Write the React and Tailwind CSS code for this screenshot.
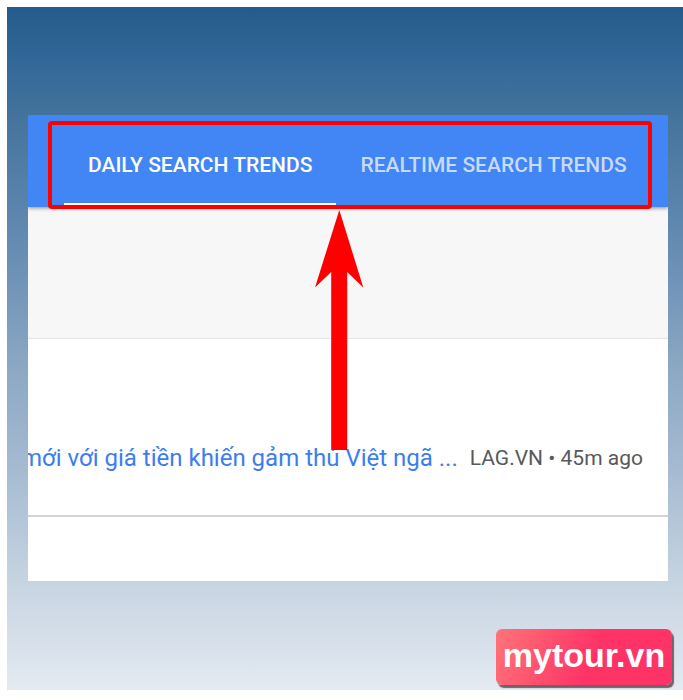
import React, { useState } from "react";

const tabs = ["DAILY SEARCH TRENDS", "REALTIME SEARCH TRENDS"];

const TrendTabs = () => {
  const [active, setActive] = useState(0);

  return (
    <nav className="relative z-10 flex h-[92px] bg-[#4285f4] pl-9 shadow-[0_1px_4px_rgba(0,0,0,0.45)]">
      {tabs.map((tab, i) => (
        <button
          key={tab}
          type="button"
          onClick={() => setActive(i)}
          className={`border-b-4 px-6 pt-[18px] pb-1 text-[21px] font-medium whitespace-nowrap ${
            active === i ? "border-white text-white" : "border-transparent text-[#c9dbfc]"
          }`}
        >
          {tab}
        </button>
      ))}
      {/* highlight around the tabs */}
      <div className="pointer-events-none absolute top-[6px] right-4 -bottom-[2px] left-5 rounded border-4 border-[#ff0000]" />
    </nav>
  );
};

const Arrow = () => (
  <svg
    viewBox="0 0 50 240"
    className="pointer-events-none absolute top-[95px] left-[286px] z-20 h-[240px] w-[50px]"
    aria-hidden="true"
  >
    <path d="M25.3 0L49.3 77.5L33.2 62V240H17.2V62L1 77.5Z" fill="#ff0000" />
  </svg>
);

const TrendRow = () => (
  <div className="flex h-[178px] items-end justify-end gap-3 overflow-hidden border-b-2 border-[#d3d4d5] pr-[25px] pb-[43px] leading-7 whitespace-nowrap">
    <a href="#" className="shrink-0 text-[24px] text-[#3b7df0]">
      mới với giá tiền khiến gảm thủ Việt ngã ...
    </a>
    <span className="shrink-0 text-[21px] text-[#58595b]">LAG.VN • 45m ago</span>
  </div>
);

const App = () => {
  return (
    <div className="min-h-screen bg-white pt-[7px] pb-[10px] pl-[7px] font-['Roboto',sans-serif]">
      <div className="bg-[linear-gradient(to_bottom,#245b8b_0%,#326899_8%,#42729b_15%,#5c85ad_30%,#7093b8_40%,#8aa7c2_52%,#a6bbd2_68%,#c8d5e2_85%,#e3eaf2_100%)] pt-[108px] pr-[15px] pb-[5px] pl-[21px]">
        <main className="relative overflow-hidden bg-white">
          <TrendTabs />
          <div className="h-[132px] border-b border-[#e4e4e4] bg-[#f7f7f7]" />
          <TrendRow />
          <div className="h-16" />
          <Arrow />
        </main>
        <div className="-mr-1 flex justify-end pt-12">
          <a
            href="#"
            className="flex h-14 w-44 items-center justify-center rounded-md bg-[linear-gradient(110deg,#ff7379_0%,#ff3366_55%)] pb-1 font-['Liberation_Sans',sans-serif] text-[34px] font-bold text-white shadow-[2px_3px_1px_#6b6468]"
          >
            mytour.vn
          </a>
        </div>
      </div>
    </div>
  );
};

export default App;
